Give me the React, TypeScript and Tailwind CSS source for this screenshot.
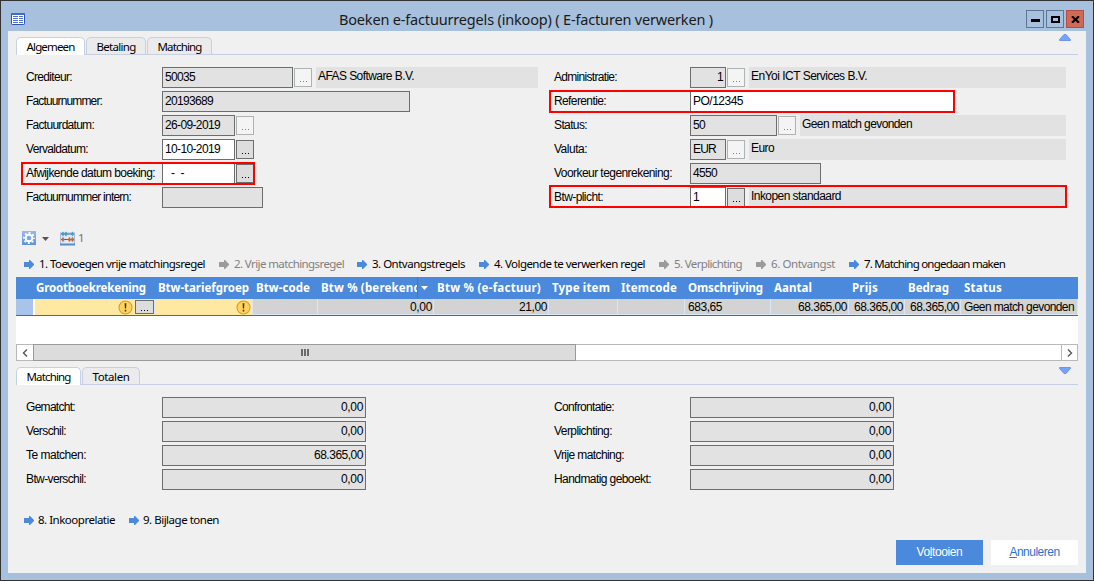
import { useLayoutEffect, useRef, useState } from "react";
import type { ReactNode } from "react";
import clsx from "clsx";

const TAHOMA = "font-['Noto_Sans','DejaVu_Sans',sans-serif]";

/** A single-line text whose letter spacing is adjusted so that it fills `w` pixels. */
function Fit({ w, children, className }: { w: number; children: string; className?: string }) {
  const ref = useRef<HTMLSpanElement>(null);
  const [spacing, setSpacing] = useState(0);
  useLayoutEffect(() => {
    if (ref.current) {
      const natural = ref.current.getBoundingClientRect().width;
      setSpacing((w - natural) / children.length);
    }
  }, []);
  return (
    <span ref={ref} className={clsx("inline-block shrink-0 whitespace-pre", className)} style={{ letterSpacing: spacing }}>
      {children}
    </span>
  );
}

function Tab({ text, w, active, className }: { text: string; w: number; active?: boolean; className: string }) {
  return (
    <div
      className={clsx(
        "flex h-[18px] justify-center rounded-t-[5px] border border-b-0 border-[#c6d0e2] text-[11.5px] leading-[17px]",
        TAHOMA,
        active ? "bg-white" : "bg-[#ebebeb] shadow-[inset_0_-1px_0_#c6d0e2]",
        className,
      )}
    >
      <Fit w={w}>{text}</Fit>
    </div>
  );
}

function Triangle({ down }: { down?: boolean }) {
  return (
    <svg width="12" height="7" viewBox="0 0 12 7" className="block">
      <path
        d={down ? "M.5 .5H11.5V1.5L7 6.5H5L.5 1.5Z" : "M.5 6.5H11.5V5.5L7 .5H5L.5 5.5Z"}
        fill="#74a3ff"
        stroke="#5b8ce0"
        strokeWidth=".8"
      />
    </svg>
  );
}

function Box({ text, w, white, right, className }: { text?: string; w?: number; white?: boolean; right?: boolean; className: string }) {
  return (
    <div
      className={clsx(
        "flex h-[21px] shrink-0 border border-[#6d6d6d] px-[2px] leading-[19px]",
        white ? "bg-white" : "bg-[#e2e2e2]",
        right && "justify-end",
        className,
      )}
    >
      {text && w ? <Fit w={w}>{text}</Fit> : null}
    </div>
  );
}

function Dots({ enabled }: { enabled?: boolean }) {
  return (
    <div
      className={clsx(
        "ml-px mt-px flex h-[19px] w-[18px] shrink-0 items-end justify-center gap-[2px] border pb-[4px]",
        enabled ? "border-[#6d6d6d] bg-[#dddddd]" : "border-[#adb2b5] bg-[#f4f4f4]",
      )}
    >
      {[0, 1, 2].map((i) => (
        <i key={i} className={clsx("size-px", enabled ? "bg-black" : "bg-[#838383]")} />
      ))}
    </div>
  );
}

function Desc({ text, w, className }: { text: string; w: number; className?: string }) {
  return (
    <div className={clsx("ml-[4px] h-[21px] bg-[#e2e2e2] pl-[2px] leading-[19px]", className)}>
      <Fit w={w}>{text}</Fit>
    </div>
  );
}

function Row({ label, w, children }: { label: string; w: number; children: ReactNode }) {
  return (
    <div className="relative flex h-[24px]">
      <div className="w-[136px] shrink-0 leading-[21px]">
        <Fit w={w}>{label}</Fit>
      </div>
      {children}
    </div>
  );
}

function Mark({ className }: { className: string }) {
  return <div className={clsx("absolute -left-[5px] h-[23px] border-2 border-[#ff0000]", className)} />;
}

function Arrow({ muted }: { muted?: boolean }) {
  return (
    <svg width="10" height="9" viewBox="0 0 10 9" className="block shrink-0">
      <path d="M0 2H5V0H6L10 4V5L6 9H5V7H0Z" fill={muted ? "#9b9b9b" : "#4a89dc"} />
    </svg>
  );
}

function Action({ text, w, muted, tight, className }: { text: string; w: number; muted?: boolean; tight?: boolean; className?: string }) {
  return (
    <div className={clsx("flex items-center text-[11.5px] leading-[14px]", TAHOMA, muted ? "text-[#808080]" : "text-black", className)}>
      <Arrow muted={muted} />
      <Fit w={w} className={tight ? "ml-[4px]" : "ml-[5px]"}>{text}</Fit>
    </div>
  );
}

function Warning() {
  return (
    <svg width="15" height="15" viewBox="0 0 15 15" className="block shrink-0">
      <circle cx="7.5" cy="7.5" r="6.5" fill="#ffd35c" stroke="#d99a33" strokeWidth="1.1" />
      <path d="M6.6 3.2H8.4L8.1 8.6H6.9ZM6.7 9.7H8.3V11.4H6.7Z" fill="#40351c" />
    </svg>
  );
}

function Gear() {
  return (
    <svg width="14" height="14" viewBox="0 0 14 14" className="block">
      <defs>
        <linearGradient id="g" x2="0" y2="1">
          <stop stopColor="#9ab9ea" />
          <stop offset="1" stopColor="#5d92e2" />
        </linearGradient>
      </defs>
      <rect width="14" height="14" fill="url(#g)" />
      <circle cx="7" cy="7" r="3.3" fill="none" stroke="#fff" strokeWidth="2" />
      <circle cx="7" cy="7" r="5" fill="none" stroke="#fff" strokeWidth="1.8" strokeDasharray="1.963 1.964" strokeDashoffset="1" />
    </svg>
  );
}

function Abacus() {
  return (
    <svg width="15" height="15" viewBox="0 0 15 15" className="block">
      <rect x=".5" y="2" width="14" height="11.500" fill="#dfeaf8" stroke="#9fbce4" />
      <path d="M0 13.500H15" stroke="#5b8ccc" strokeWidth="2" />
      <path d="M1 3H14M1 8.500H14" stroke="#4e6180" />
      <path d="M3 .8L4.500 3L3 5.200L1.500 3ZM6 .8L7.500 3L6 5.200L4.500 3ZM12.500 .8L14 3L12.500 5.200L11 3Z" fill="#4aa0c4" stroke="#4aa0c4" strokeWidth=".5" />
      <path d="M3 6.200L4.500 8.500L3 10.800L1.500 8.500ZM9.500 6.200L11 8.500L9.500 10.800L8 8.500ZM12.500 6.200L14 8.500L12.500 10.800L11 8.500Z" fill="#c66a35" stroke="#c66a35" strokeWidth=".5" />
    </svg>
  );
}

const columns = [
  { t: "Grootboekrekening", w: 110, c: "w-[122px]" },
  { t: "Btw-tariefgroep", w: 91, c: "w-[98px]" },
  { t: "Btw-code", w: 54, c: "w-[65px]" },
  { t: "Btw % (berekend)", w: 104, c: "w-[116px]", filter: true },
  { t: "Btw % (e-factuur)", w: 104, c: "w-[115px]" },
  { t: "Type item", w: 58, c: "w-[69px]" },
  { t: "Itemcode", w: 56, c: "w-[67px]" },
  { t: "Omschrijving", w: 75, c: "w-[86px]" },
  { t: "Aantal", w: 38, c: "w-[78px]" },
  { t: "Prijs", w: 26, c: "w-[56px]" },
  { t: "Bedrag", w: 41, c: "w-[56px]" },
  { t: "Status", w: 38, c: "w-[117px]" },
];

const cells = [
  { c: "w-[65px]" },
  { t: "0,00", w: 22, r: true, c: "w-[116px]" },
  { t: "21,00", w: 28, r: true, c: "w-[115px]" },
  { c: "w-[69px]" },
  { c: "w-[67px]" },
  { t: "683,65", w: 34, c: "w-[86px]" },
  { t: "68.365,00", w: 49, r: true, c: "w-[78px]" },
  { t: "68.365,00", w: 49, r: true, c: "w-[56px]" },
  { t: "68.365,00", w: 49, r: true, c: "w-[56px]" },
  { t: "Geen match gevonden", w: 110, c: "w-[117px]" },
];

const totalsLeft = [
  { l: "Gematcht:", w: 49, v: "0,00", vw: 22 },
  { l: "Verschil:", w: 40, v: "0,00", vw: 22 },
  { l: "Te matchen:", w: 60, v: "68.365,00", vw: 49 },
  { l: "Btw-verschil:", w: 60, v: "0,00", vw: 22 },
];
const totalsRight = [
  { l: "Confrontatie:", w: 60, v: "0,00", vw: 22 },
  { l: "Verplichting:", w: 58, v: "0,00", vw: 22 },
  { l: "Vrije matching:", w: 70, v: "0,00", vw: 22 },
  { l: "Handmatig geboekt:", w: 97, v: "0,00", vw: 22 },
];

function TitleBar() {
  return (
    <header className="flex h-[30px] items-start">
      <svg width="14" height="12" viewBox="0 0 14 12" className="ml-[10px] mt-[12px] block shrink-0">
        <rect x=".5" y=".5" width="13" height="11" rx=".8" fill="#fff" stroke="#2f51b0" />
        <path d="M0 1H14" stroke="#4668c6" strokeWidth="2" />
        <path d="M2 3.500H7M8 3.500H12M2 5.500H7M8 5.500H12M2 7.500H7M8 7.500H12M2 9.500H7M8 9.500H12" stroke="#4b6ed0" />
      </svg>
      <h1 className={clsx("mt-[7px] flex flex-1 justify-center pl-[45px] pr-[44px] text-[14.5px] leading-[22px] text-[#1a1a1a]", TAHOMA)}>
        <Fit w={374}>{"Boeken e-factuurregels (inkoop) ( E-facturen verwerken )"}</Fit>
      </h1>
      <div className="mr-[9px] mt-[9px] flex shrink-0 gap-[2px]">
        <div className="flex h-[18px] w-[18px] items-end justify-center border border-[#5f7594] pb-[5px]">
          <i className="h-[3px] w-[9px] bg-black" />
        </div>
        <div className="flex h-[18px] w-[18px] items-center justify-center border border-[#5f7594]">
          <i className="h-[7px] w-[9px] border-2 border-black" />
        </div>
        <div className="flex h-[18px] w-[18px] items-center justify-center border border-[#b2503f] bg-[#cf6a56]">
          <svg width="9" height="7" viewBox="0 0 9 7">
            <path d="M1 .3L8 6.700M8 .3L1 6.700" stroke="#000" strokeWidth="2.2" />
          </svg>
        </div>
      </div>
    </header>
  );
}

function Form() {
  return (
    <section className="mt-[12px] flex h-[144px] pl-[18px]">
      <div className="w-[528px] shrink-0">
        <Row label="Crediteur:" w={46}>
          <Box text="50035" w={30} className="w-[131px]" />
          <Dots />
          <Desc text="AFAS Software B.V." w={96} className="w-[222px]" />
        </Row>
        <Row label="Factuurnummer:" w={76}>
          <Box text="20193689" w={48} className="w-[248px]" />
        </Row>
        <Row label="Factuurdatum:" w={68}>
          <Box text="26-09-2019" w={55} className="w-[73px]" />
          <Dots />
        </Row>
        <Row label="Vervaldatum:" w={62}>
          <Box text="10-10-2019" w={55} white className="w-[73px]" />
          <Dots enabled />
        </Row>
        <Row label="Afwijkende datum boeking:" w={129}>
          <Box text="  -  -" w={19} white className="w-[73px]" />
          <Dots enabled />
          <Mark className="-top-px w-[234px]" />
        </Row>
        <Row label="Factuurnummer intern:" w={105}>
          <Box className="w-[101px]" />
        </Row>
      </div>
      <div className="w-[512px] shrink-0">
        <Row label="Administratie:" w={63}>
          <Box text="1" w={6} right className="w-[36px]" />
          <Dots />
          <Desc text="EnYoi ICT Services B.V." w={116} className="flex-1" />
        </Row>
        <Row label="Referentie:" w={52}>
          <Box text="PO/12345" w={50} white className="w-[264px]" />
          <Mark className="-top-px w-[406px]" />
        </Row>
        <Row label="Status:" w={33}>
          <Box text="50" w={12} className="w-[87px]" />
          <Dots />
          <Desc text="Geen match gevonden" w={110} className="flex-1" />
        </Row>
        <Row label="Valuta:" w={33}>
          <Box text="EUR" w={23} className="w-[36px]" />
          <Dots />
          <Desc text="Euro" w={23} className="flex-1" />
        </Row>
        <Row label="Voorkeur tegenrekening:" w={118}>
          <Box text="4550" w={24} className="w-[131px]" />
        </Row>
        <Row label="Btw-plicht:" w={49}>
          <Box text="1" w={6} white className="w-[36px]" />
          <Dots enabled />
          <Desc text="Inkopen standaard" w={90} className="flex-1" />
          <Mark className="-top-[2px] w-[518px]" />
        </Row>
      </div>
    </section>
  );
}

function Grid() {
  return (
    <section className="mx-[8px] h-[84px] overflow-hidden bg-white">
      <div className={clsx("flex h-[22px] bg-[#4a89dc] pl-[17px] text-[11.5px] font-bold leading-[22px] text-white", TAHOMA)}>
        {columns.map((col) => (
          <div key={col.t} className={clsx("flex shrink-0 pl-[3px]", col.c)}>
            {col.filter ? (
              <>
                <div className="w-[97px] overflow-hidden border-r border-[#3c78cc]">
                  <Fit w={col.w}>{col.t}</Fit>
                </div>
                <svg width="7" height="4" viewBox="0 0 7 4" className="ml-[3px] mt-[9px] block">
                  <path d="M0 0H7L3.500 4Z" fill="#fff" />
                </svg>
              </>
            ) : (
              <Fit w={col.w}>{col.t}</Fit>
            )}
          </div>
        ))}
      </div>
      <div className="flex h-[17px] border-b border-[#5d6570] bg-[#dbe7f7]">
        <div className="w-[17px] bg-[#a9c4ea]" />
        <div className="mr-px flex w-[121px] shrink-0 items-center justify-end border-l-2 border-white bg-[#ffe9a2]">
          <Warning />
          <div className="ml-[2px] flex h-[14px] w-[19px] items-end justify-center gap-[2px] border border-[#6d6d6d] bg-[#dddddd] pb-[2px]">
            <i className="size-px bg-black" />
            <i className="size-px bg-black" />
            <i className="size-px bg-black" />
          </div>
        </div>
        <div className="mr-px flex w-[97px] shrink-0 items-center justify-end bg-[#ffe9a2] pr-px">
          <Warning />
        </div>
        {cells.map((cell, i) => (
          <div key={i} className={clsx("flex h-[15px] shrink-0 border-r border-[#dbe7f7] bg-[#d3d3d3] leading-[16px]", cell.c, cell.r ? "justify-end pr-px" : "pl-[3px]")}>
            {cell.t && cell.w ? <Fit w={cell.w}>{cell.t}</Fit> : null}
          </div>
        ))}
      </div>
      <div className="mt-[28px] flex h-[17px] border border-[#b9b9b9]">
        <div className="flex w-[16px] items-center justify-center">
          <svg width="6" height="8" viewBox="0 0 6 8"><path d="M5 .5L1.500 4L5 7.500" fill="none" stroke="#555" strokeWidth="1.4" /></svg>
        </div>
        <div className="-my-px flex w-[543px] items-center justify-center gap-px border border-[#9a9a9a] bg-[#dcdcdc]">
          <i className="h-[7px] w-[2px] bg-[#6b6b6b]" />
          <i className="h-[7px] w-[2px] bg-[#6b6b6b]" />
          <i className="h-[7px] w-[2px] bg-[#6b6b6b]" />
        </div>
        <div className="flex-1" />
        <div className="flex w-[16px] items-center justify-center border-l border-[#b9b9b9]">
          <svg width="6" height="8" viewBox="0 0 6 8"><path d="M1 .5L4.500 4L1 7.500" fill="none" stroke="#555" strokeWidth="1.4" /></svg>
        </div>
      </div>
    </section>
  );
}

export default function App() {
  return (
    <div className="h-[581px] w-[1094px] overflow-hidden border border-[#333] bg-[#a6c0dd] font-['Liberation_Sans',Arial,sans-serif] text-[12px] text-black">
      <TitleBar />
      <main className="ml-[7px] h-[542px] w-[1078px] bg-[#f0f0f0]">
        <div className="mx-[8px] flex h-[24px] items-end shadow-[inset_0_-1px_0_#c6d0e2]">
          <Tab text="Algemeen" w={48} active className="w-[69px]" />
          <Tab text="Betaling" w={39} className="ml-px w-[60px]" />
          <Tab text="Matching" w={44} className="ml-px w-[65px]" />
          <div className="mb-[14px] ml-auto mr-[7px]"><Triangle /></div>
        </div>
        <Form />
        <div className="mt-[19px] flex h-[16px] items-center pl-[14px]">
          <Gear />
          <svg width="7" height="4" viewBox="0 0 7 4" className="ml-[6px] mt-px block"><path d="M0 0H7L3.500 4Z" fill="#555" /></svg>
          <div className="ml-[11px]"><Abacus /></div>
          <span className={clsx("ml-[3px] text-[11.5px] text-[#707070]", TAHOMA)}>1</span>
        </div>
        <div className="mt-[11px] flex h-[14px] pl-[16px]">
          <Action text="1. Toevoegen vrije matchingsregel" w={166} />
          <Action text="2. Vrije matchingsregel" w={110} muted className="ml-[14px]" />
          <Action text="3. Ontvangstregels" w={93} className="ml-[13px]" />
          <Action text="4. Volgende te verwerken regel" w={151} className="ml-[14px]" />
          <Action text="5. Verplichting" w={68} muted className="ml-[14px]" />
          <Action text="6. Ontvangst" w={64} muted className="ml-[14px]" />
          <Action text="7. Matching ongedaan maken" w={141} className="ml-[14px]" />
        </div>
        <div className="h-[6px]" />
        <Grid />
        <div className="mx-[8px] flex h-[24px] items-end shadow-[inset_0_-1px_0_#c6d0e2]">
          <Tab text="Matching" w={44} active className="w-[65px]" />
          <Tab text="Totalen" w={37} className="ml-px w-[58px]" />
          <div className="mb-[11px] ml-auto mr-[7px]"><Triangle down /></div>
        </div>
        <section className="mt-[12px] flex h-[96px] pl-[18px]">
          {[totalsLeft, totalsRight].map((list, i) => (
            <div key={i} className="w-[528px] shrink-0">
              {list.map((f) => (
                <Row key={f.l} label={f.l} w={f.w}>
                  <Box text={f.v} w={f.vw} right className="w-[204px]" />
                </Row>
              ))}
            </div>
          ))}
        </section>
        <div className="mt-[20px] flex h-[14px] pl-[16px]">
          <Action text="8. Inkooprelatie" w={77} tight />
          <Action text="9. Bijlage tonen" w={76} tight className="ml-[14px]" />
        </div>
        <div className="mt-[13px] flex justify-end gap-[8px] pr-[8px] leading-[25px]">
          <button className="h-[25px] w-[87px] bg-[#4a89dc] tracking-[-0.4px] text-white">Vo<u>l</u>tooien</button>
          <button className="h-[25px] w-[87px] bg-white tracking-[-0.5px] text-[#2a73d0]"><u>A</u>nnuleren</button>
        </div>
      </main>
    </div>
  );
}
